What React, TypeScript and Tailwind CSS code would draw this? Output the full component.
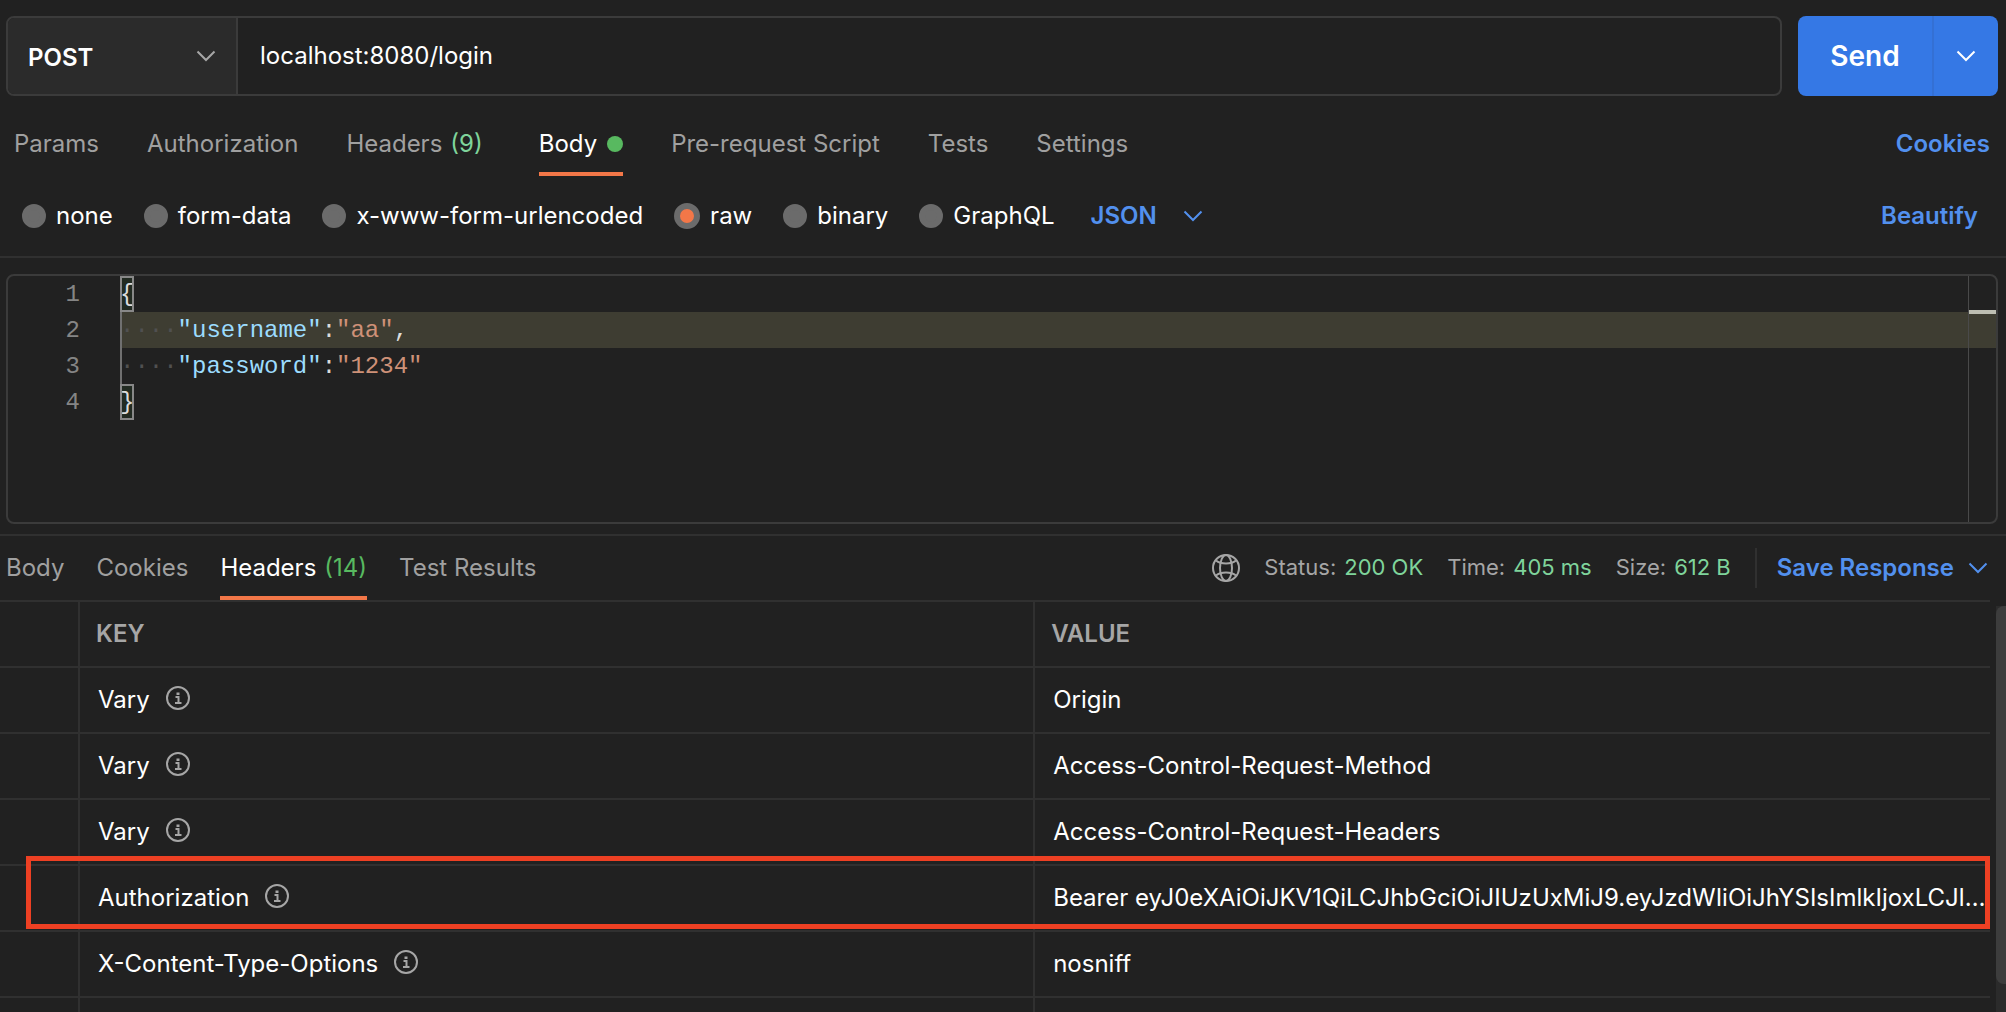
import type { ReactNode } from "react"

const requestTabs = [
  { label: "Params" },
  { label: "Authorization" },
  { label: "Headers", count: "(9)" },
  { label: "Body", active: true },
  { label: "Pre-request Script" },
  { label: "Tests" },
  { label: "Settings" },
]

const responseTabs = [
  { label: "Body" },
  { label: "Cookies" },
  { label: "Headers", count: "(14)", active: true },
  { label: "Test Results" },
]

const bodyTypes = ["none", "form-data", "x-www-form-urlencoded", "raw", "binary", "GraphQL"]

const stats = [
  { label: "Status:", value: "200 OK" },
  { label: "Time:", value: "405 ms" },
  { label: "Size:", value: "612 B" },
]

const headers = [
  { key: "Vary", value: "Origin" },
  { key: "Vary", value: "Access-Control-Request-Method" },
  { key: "Vary", value: "Access-Control-Request-Headers" },
  {
    key: "Authorization",
    value: "Bearer eyJ0eXAiOiJKV1QiLCJhbGciOiJIUzUxMiJ9.eyJzdWIiOiJhYSIsImlkIjoxLCJleHAiOjE2NzY",
  },
  { key: "X-Content-Type-Options", value: "nosniff" },
]

function Chevron({ className = "" }: { className?: string }) {
  return (
    <svg viewBox="0 0 20 12" className={`h-3 w-5 ${className}`} fill="none" stroke="currentColor" strokeWidth="2" aria-hidden="true">
      <path d="M1.5 1.5 10 10l8.500-8.500" />
    </svg>
  )
}

function InfoIcon() {
  return (
    <svg viewBox="0 0 24 24" className="size-6" fill="none" stroke="currentColor" strokeWidth="2" aria-hidden="true">
      <circle cx="12" cy="12" r="11" />
      <path d="M9.500 11h3v6M9 17h6.500" />
      <rect x="10.500" y="6.500" width="3" height="2.500" fill="currentColor" stroke="none" />
    </svg>
  )
}

function GlobeIcon() {
  return (
    <svg viewBox="0 0 28 28" className="size-7" fill="none" stroke="currentColor" strokeWidth="2" aria-hidden="true">
      <circle cx="14" cy="14" r="13" />
      <ellipse cx="14" cy="14" rx="6" ry="13" />
      <path d="M4 6.500c5 4 15 4 20 0M4 21.500c5-4 15-4 20 0" />
    </svg>
  )
}

function CodeLine({ number, active, children }: { number: number; active?: boolean; children: ReactNode }) {
  return (
    <div className="flex h-9 leading-[38px]">
      <span className="w-18 shrink-0 text-right text-[#858585]">{number}</span>
      <div className={`ml-10 flex flex-1 whitespace-pre ${active ? "bg-[#3e3d32]" : ""}`}>{children}</div>
    </div>
  )
}

function Bracket({ children }: { children: ReactNode }) {
  return (
    <span className="h-9 w-3.5 bg-[#222b22] text-[#dcdcdc] outline-2 -outline-offset-2 outline-[#888888]">
      {children}
    </span>
  )
}

function Property({ name, value, comma }: { name: string; value: string; comma?: boolean }) {
  return (
    <span className="h-9 text-[#dcdcdc] shadow-[inset_2px_0_#707070]">
      <span className="text-[#505050]">····</span>
      <span className="text-[#9cdcfe]">"{name}"</span>:<span className="text-[#ce9178]">"{value}"</span>
      {comma && ","}
    </span>
  )
}

function RequestBar() {
  return (
    <div className="flex h-20 gap-4 pr-2 pl-1.5">
      <div className="flex flex-1 overflow-hidden rounded-lg border-2 border-[#3b3b3b]">
        <div className="relative w-[230px] border-r-2 border-[#3b3b3b] bg-[#2b2b2b]">
          <select aria-label="Method" className="h-full w-full appearance-none pt-1 pl-5 font-semibold text-white outline-none">
            <option>POST</option>
            <option>GET</option>
          </select>
          <Chevron className="pointer-events-none absolute top-8 right-5 text-[#a6a6a6]" />
        </div>
        <input aria-label="Request URL" defaultValue="localhost:8080/login" className="flex-1 px-5.5 text-white outline-none" />
      </div>
      <div className="flex w-50 overflow-hidden rounded-lg bg-[#3578e5] text-white">
        <button className="flex-1 pt-0.5 text-[28px] font-semibold">Send</button>
        <button aria-label="Send options" className="flex w-[66px] items-center justify-center border-l-2 border-[#3470d4]">
          <Chevron />
        </button>
      </div>
    </div>
  )
}

function RequestTabs() {
  return (
    <div className="mt-4 flex h-16 items-stretch justify-between pr-4 pl-3.5">
      <nav className="flex gap-12">
        {requestTabs.map((tab) => (
          <button
            key={tab.label}
            className={`flex items-center gap-2 border-b-4 pt-1 ${tab.active ? "border-[#f37748] text-white" : "border-transparent text-[#a0a0a0]"}`}
          >
            {tab.label}
            {tab.count && <span className="pr-2 text-[#7fd49b]">{tab.count}</span>}
            {tab.active && <span className="ml-0.5 size-4 rounded-full bg-[#58b960]" />}
          </button>
        ))}
      </nav>
      <button className="pt-1 pb-1 font-semibold text-[#5290ee]">Cookies</button>
    </div>
  )
}

function BodyTypeRow() {
  return (
    <div className="flex h-[82px] items-center border-b-2 border-[#303030] pr-7 pl-5.5">
      <div role="radiogroup" aria-label="Body type" className="flex gap-[31px]">
        {bodyTypes.map((type) => (
          <label key={type} className="flex items-center gap-2.5 text-white">
            <input
              type="radio"
              name="body-type"
              defaultChecked={type === "raw"}
              className="size-6 appearance-none rounded-full border-[6px] border-[#6b6b6b] bg-[#6b6b6b] checked:size-[26px] checked:bg-[#f37748]"
            />
            {type}
          </label>
        ))}
      </div>
      <div className="relative ml-9 text-[#5290ee]">
        <select aria-label="Raw format" className="w-28 appearance-none font-semibold outline-none">
          <option>JSON</option>
          <option>Text</option>
        </select>
        <Chevron className="pointer-events-none absolute top-2.5 right-0" />
      </div>
      <button className="ml-auto font-semibold text-[#5290ee]">Beautify</button>
    </div>
  )
}

function Editor() {
  return (
    <div className="mt-4 mr-2 mb-2.5 ml-1.5 h-[250px] overflow-hidden rounded-lg border-2 border-[#3b3b3b]">
      <div className="relative h-full font-['Liberation_Mono',monospace]">
        <CodeLine number={1}>
          <Bracket>{"{"}</Bracket>
        </CodeLine>
        <CodeLine number={2} active>
          <Property name="username" value="aa" comma />
        </CodeLine>
        <CodeLine number={3}>
          <Property name="password" value="1234" />
        </CodeLine>
        <CodeLine number={4}>
          <Bracket>{"}"}</Bracket>
        </CodeLine>
        {/* overview ruler with the cursor mark */}
        <div className="absolute inset-y-0 right-0 w-7 border-l border-[#4a4a4a] pt-[34px]">
          <div className="h-1 bg-[#bdbeb2]" />
        </div>
      </div>
    </div>
  )
}

function ResponseBar() {
  return (
    <div className="flex h-[66px] justify-between border-t-2 border-[#303030]">
      <nav className="flex gap-8 pl-1.5">
        {responseTabs.map((tab) => (
          <button
            key={tab.label}
            className={`flex items-center gap-2 border-b-4 pt-1 ${tab.active ? "border-[#f37748] text-white" : "border-transparent text-[#a0a0a0]"}`}
          >
            {tab.label}
            {tab.count && <span className="text-[#58b960]">{tab.count}</span>}
          </button>
        ))}
      </nav>
      <div className="flex items-center gap-6 pr-4.5 text-[22px] text-[#a6a6a6]">
        <GlobeIcon />
        {stats.map((stat) => (
          <span key={stat.label} className="flex gap-2">
            {stat.label}
            <span className="text-[#7fd49b]">{stat.value}</span>
          </span>
        ))}
        <button className="flex h-10 items-center gap-3.5 border-l-2 border-[#303030] pl-5 text-2xl font-semibold text-[#5290ee]">
          Save Response
          <Chevron />
        </button>
      </div>
    </div>
  )
}

function HeadersTable() {
  return (
    <div className="flex min-h-0 flex-1">
      <div className="relative min-w-0 flex-1">
        <table className="w-full table-fixed border-collapse text-left text-white">
          <colgroup>
            <col className="w-[79px]" />
            <col className="w-[48%]" />
            <col />
          </colgroup>
          <thead className="text-[#a6a6a6]">
            <tr className="h-[66px] border-y-2 border-[#303030]">
              <th className="border-r-2 border-[#303030]" />
              <th className="border-r-2 border-[#303030] pl-4 font-semibold">KEY</th>
              <th className="pl-4 font-semibold">VALUE</th>
            </tr>
          </thead>
          <tbody>
            {headers.map((header, index) => (
              <tr key={index} className="h-[66px] border-b-2 border-[#303030]">
                <td className="border-r-2 border-[#303030]" />
                <td className="border-r-2 border-[#303030] pl-4.5">
                  <span className="flex items-center gap-4">
                    {header.key}
                    <span className="pb-1 text-[#a6a6a6]">
                      <InfoIcon />
                    </span>
                  </span>
                </td>
                <td className="truncate pr-1 pl-4.5">{header.value}</td>
              </tr>
            ))}
            <tr className="h-4">
              <td className="border-r-2 border-[#303030]" />
              <td className="border-r-2 border-[#303030]" />
              <td />
            </tr>
          </tbody>
        </table>
        {/* red frame round the Authorization row */}
        <div className="pointer-events-none absolute top-[256px] right-0 left-[26px] h-[73px] border-[5px] border-[#ee4023]" />
      </div>
      <div className="mt-1.5 ml-1.5 w-2.5 bg-[#2b2b2b]">
        <div className="h-[378px] rounded-l-lg bg-[#3d3d3d]" />
      </div>
    </div>
  )
}

export default function App() {
  return (
    <main className="flex h-screen flex-col overflow-hidden bg-[#212121] pt-4 font-['Inter',sans-serif] text-2xl">
      <RequestBar />
      <RequestTabs />
      <BodyTypeRow />
      <Editor />
      <ResponseBar />
      <HeadersTable />
    </main>
  )
}
